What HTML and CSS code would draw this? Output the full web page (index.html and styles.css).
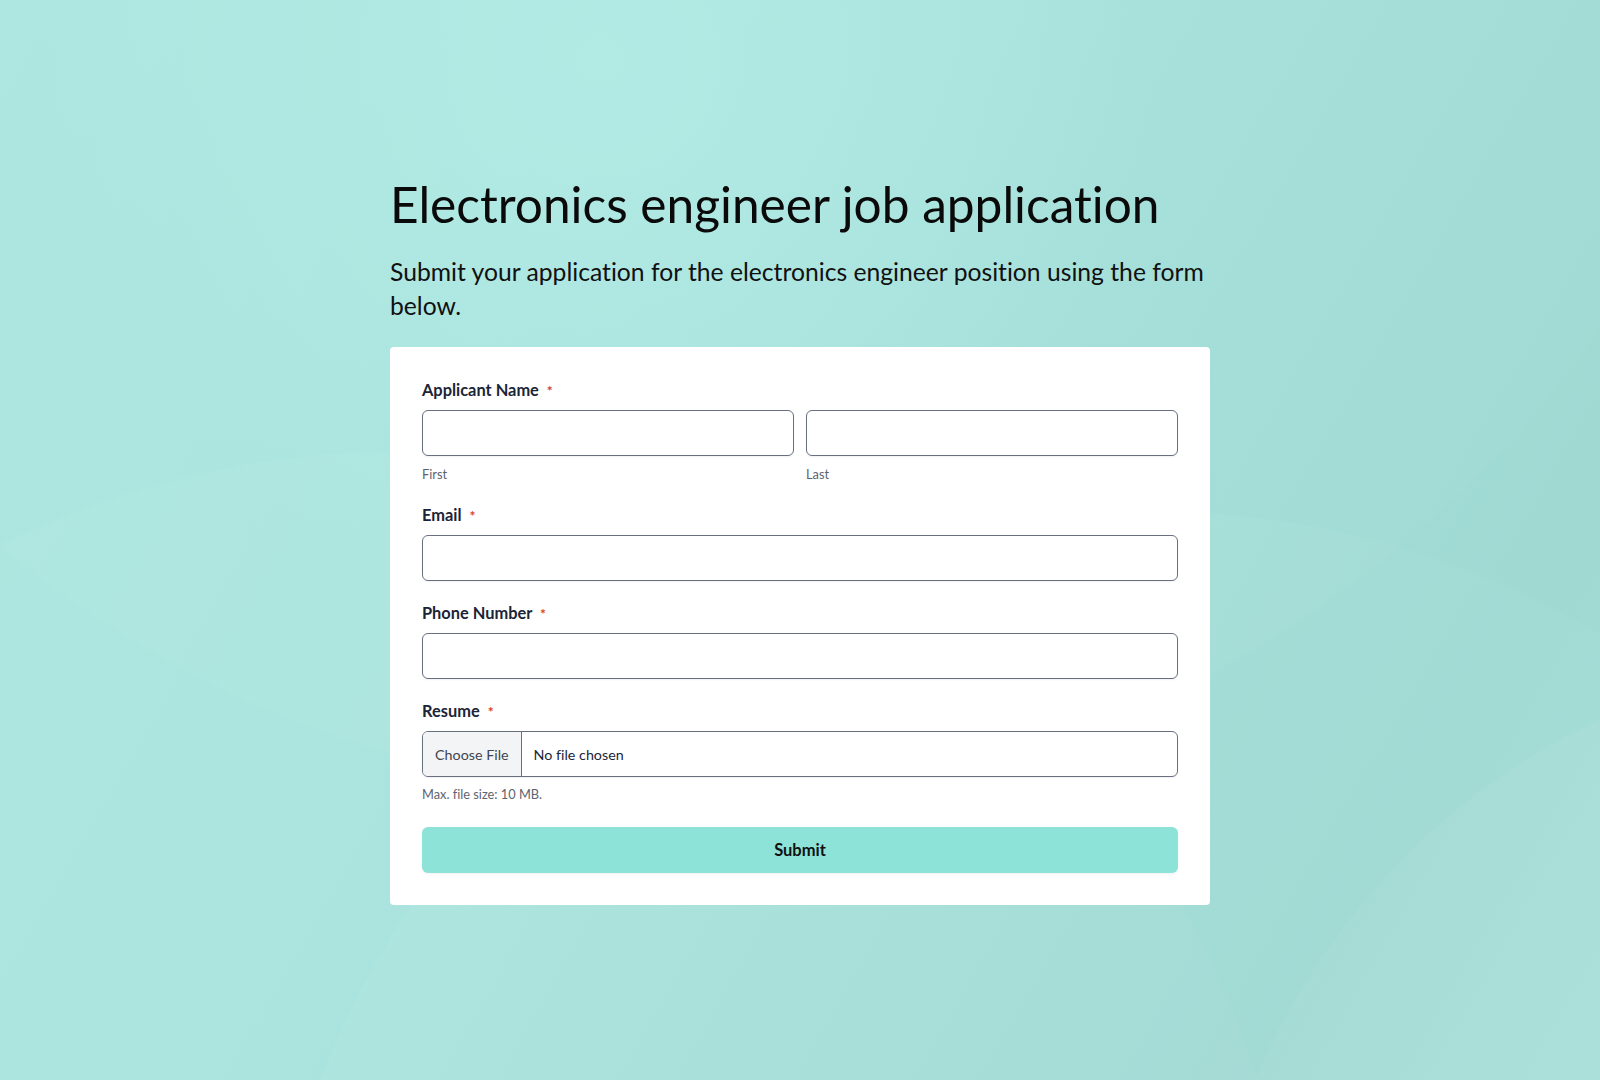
FILE: index.html
```html
<!DOCTYPE html>
<html lang="en">
<head>
<meta charset="utf-8">
<title>Electronics engineer job application</title>
<link rel="stylesheet" href="styles.css">
</head>
<body>
<div class="bg"></div>
<main class="page">
  <h1 class="title">Electronics engineer job application</h1>
  <p class="intro">Submit your application for the electronics engineer position using the form below.</p>
  <form class="card">
    <div class="field">
      <div class="label">Applicant Name <span class="req">*</span></div>
      <div class="name-row">
        <div class="sub">
          <div class="input"></div>
          <div class="hint">First</div>
        </div>
        <div class="sub">
          <div class="input"></div>
          <div class="hint">Last</div>
        </div>
      </div>
    </div>
    <div class="field">
      <div class="label">Email <span class="req">*</span></div>
      <div class="input"></div>
    </div>
    <div class="field">
      <div class="label">Phone Number <span class="req">*</span></div>
      <div class="input"></div>
    </div>
    <div class="field">
      <div class="label">Resume <span class="req">*</span></div>
      <div class="input file">
        <span class="choose">Choose File</span>
        <span class="chosen">No file chosen</span>
      </div>
      <div class="hint size">Max. file size: 10 MB.</div>
    </div>
    <div class="submit">Submit</div>
  </form>
</main>
</body>
</html>
```

FILE: styles.css
```css
html, body {
  margin: 0;
  padding: 0;
}
body {
  min-height: 1080px;
  font-family: Lato, "Noto Sans", sans-serif;
  font-variant-ligatures: no-common-ligatures;
  color: #111;
  background: #a8e3dd;
  position: relative;
  overflow: hidden;
}
.bg {
  position: absolute;
  inset: 0;
  z-index: 0;
  background:
    radial-gradient(circle 560px at 600px 60px, rgba(180, 236, 230, 0.75) 0, rgba(180, 236, 230, 0) 100%),
    radial-gradient(circle 900px at 400px 1350px, rgba(255, 255, 255, 0.035) 99.7%, rgba(255, 255, 255, 0) 100%),
    radial-gradient(circle 890px at 1150px 1400px, rgba(255, 255, 255, 0.035) 99.7%, rgba(255, 255, 255, 0) 100%),
    radial-gradient(circle 700px at 1900px 1350px, rgba(255, 255, 255, 0.045) 99.7%, rgba(255, 255, 255, 0) 100%),
    radial-gradient(circle 1100px at 700px -300px, rgba(255, 255, 255, 0.025) 99.7%, rgba(255, 255, 255, 0) 100%),
    linear-gradient(120deg, #ace6e0 0%, #a8e3dd 40%, #a1dcd6 70%, #9fd9d2 85%, #a4ded8 100%);
}
.page {
  position: relative;
  z-index: 1;
  width: 820px;
  margin: 0 auto;
  padding-top: 176px;
}
.title {
  margin: 0;
  font-family: Lato, sans-serif;
  font-weight: 400;
  font-size: 49.6px;
  line-height: 56px;
  color: #0a0a0a;
}
.intro {
  margin: 23px 0 24px;
  font-size: 24.7px;
  line-height: 34px;
  color: #111;
}
.card {
  display: block;
  background: #fff;
  border-radius: 4px;
  padding: 32px;
}
.field {
  margin-bottom: 21px;
}
.label {
  font-size: 16.4px;
  font-weight: 700;
  line-height: 22px;
  color: #1b2537;
  margin-bottom: 8px;
}
.req {
  color: #d9412b;
  font-size: 14px;
  margin-left: 4px;
}
.name-row {
  display: flex;
  gap: 12px;
}
.sub {
  flex: 1;
}
.input {
  box-sizing: border-box;
  height: 46px;
  border: 1px solid #687080;
  border-radius: 6px;
  background: #fff;
  box-shadow: 0 1px 2px rgba(0, 0, 0, 0.06);
}
.hint {
  margin-top: 10px;
  font-size: 12.8px;
  line-height: 17px;
  color: #5d6470;
}
.file {
  display: flex;
  align-items: stretch;
  overflow: hidden;
  font-size: 14.3px;
}
.choose {
  display: flex;
  align-items: center;
  padding: 0 12px;
  background: #f3f4f6;
  border-right: 1px solid #687080;
  color: #3f4550;
}
.chosen {
  display: flex;
  align-items: center;
  padding: 0 12px;
  color: #1b2537;
}
.size {
  margin-top: 9px;
}
.submit {
  margin-top: 24px;
  height: 46px;
  border-radius: 6px;
  background: #8de3d8;
  display: flex;
  align-items: center;
  justify-content: center;
  font-weight: 700;
  font-size: 16.5px;
  color: #111;
  box-shadow: 0 1px 3px rgba(0, 0, 0, 0.06);
}
```
